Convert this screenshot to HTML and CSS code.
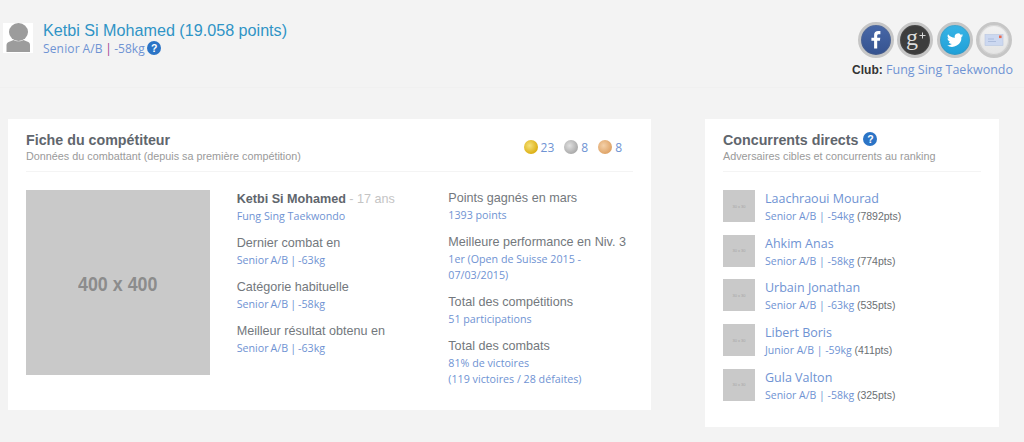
FILE: index.html
```html
<!DOCTYPE html>
<html lang="fr">
<head>
<meta charset="utf-8">
<title>Ketbi Si Mohamed</title>
<link rel="stylesheet" href="styles.css">
</head>
<body>
<header class="top">
  <div class="identity">
    <svg class="avatar" viewBox="0 0 30 30" width="30" height="30"><rect width="30" height="30" fill="#fff"/><ellipse cx="15.500" cy="9" rx="9.500" ry="9" fill="#9c9c9c"/><path d="M3.500 29v-7c0-2 1.500-3 3.500-3.500l3.500-1.500c1.200.8 3 1.300 5 1.300s3.800-.5 5-1.300l3.500 1.500c2 .5 3 1.500 3 3.500v7z" fill="#9c9c9c"/></svg>
    <div>
      <h1 class="name">Ketbi Si Mohamed (19.058 points)</h1>
      <div class="cat"><a>Senior A/B</a> <span class="pipe">|</span> <a>-58kg</a> <span class="help">?</span></div>
    </div>
  </div>
  <div class="share">
    <div class="socials">
      <span class="soc fb"><svg viewBox="0 0 30 30" width="30" height="30"><path d="M16.200 23.500v-7.800h2.700l.4-3h-3.100v-1.900c0-.9.300-1.500 1.600-1.500h1.600V6.100c-.3 0-1.300-.1-2.300-.1-2.400 0-4 1.400-4 4.100v2.600h-2.700v3h2.700v7.800z" fill="#fff"/></svg></span>
      <span class="soc gp"><svg viewBox="0 0 30 30" width="30" height="30"><text class="gp-g" x="6" y="20">g</text><path d="M19.500 10.500h6M22.500 7.500v6" stroke="#d8d8d8" stroke-width="1" fill="none"/></svg></span>
      <span class="soc tw"><svg viewBox="0 0 30 30" width="30" height="30"><path transform="translate(15 15) scale(.82) translate(-15 -15)" d="M25 9.200c-.8.300-1.500.5-2.300.6.800-.5 1.500-1.300 1.800-2.200-.8.500-1.600.8-2.600 1a4 4 0 0 0-7 3.700C11.500 12.100 8.500 10.500 6.500 8c-1.100 1.800-.5 4.200 1.200 5.400-.6 0-1.200-.2-1.800-.5 0 2 1.400 3.600 3.300 4-.6.200-1.200.2-1.800.1.500 1.600 2 2.800 3.800 2.800A8.300 8.300 0 0 1 5 21.500 11.500 11.500 0 0 0 22.800 11.200c.9-.5 1.600-1.200 2.200-2z" fill="#fff"/></svg></span>
      <span class="soc ml"><svg viewBox="0 0 30 30" width="30" height="30"><rect x="6" y="9.500" width="18" height="11" fill="#ccd8f0" stroke="#b8c6e2" stroke-width=".6"/><path d="M9 14h6M9 16.500h8" stroke="#a5b6d8" stroke-width=".8"/><rect x="20" y="10.500" width="2.600" height="2.600" fill="#e8694f"/></svg></span>
    </div>
    <div class="club"><b>Club:</b> <a>Fung Sing Taekwondo</a></div>
  </div>
</header>

<main class="content">
  <section class="card fiche">
    <div class="card-head">
      <div>
        <h2>Fiche du compétiteur</h2>
        <p class="sub">Données du combattant (depuis sa première compétition)</p>
      </div>
      <div class="medals">
        <span class="medal gold"></span><a>23</a>
        <span class="medal silver"></span><a>8</a>
        <span class="medal bronze"></span><a>8</a>
      </div>
    </div>
    <div class="fiche-body">
      <div class="photo"><span class="photo-label">400 x 400</span></div>
      <div class="col col-a">
        <div class="item"><div class="lbl"><b>Ketbi Si Mohamed</b> <span class="age">- 17 ans</span></div><a class="val">Fung Sing Taekwondo</a></div>
        <div class="item"><div class="lbl">Dernier combat en</div><a class="val tight">Senior A/B | -63kg</a></div>
        <div class="item"><div class="lbl">Catégorie habituelle</div><a class="val tight">Senior A/B | -58kg</a></div>
        <div class="item"><div class="lbl">Meilleur résultat obtenu en</div><a class="val tight">Senior A/B | -63kg</a></div>
      </div>
      <div class="col col-b">
        <div class="item"><div class="lbl">Points gagnés en mars</div><a class="val">1393 points</a></div>
        <div class="item"><div class="lbl">Meilleure performance en Niv. 3</div><a class="val">1er (Open de Suisse 2015 -<br>07/03/2015)</a></div>
        <div class="item"><div class="lbl">Total des compétitions</div><a class="val">51 participations</a></div>
        <div class="item"><div class="lbl">Total des combats</div><a class="val">81% de victoires<br>(119 victoires / 28 défaites)</a></div>
      </div>
    </div>
  </section>

  <aside class="card rivals">
    <div class="card-head">
      <div>
        <h2>Concurrents directs <span class="help">?</span></h2>
        <p class="sub">Adversaires cibles et concurrents au ranking</p>
      </div>
    </div>
    <ul class="rival-list">
      <li><span class="thumb">30 x 30</span><div><a class="rname">Laachraoui Mourad</a><div class="rmeta"><a>Senior A/B | -54kg</a> <span>(7892pts)</span></div></div></li>
      <li><span class="thumb">30 x 30</span><div><a class="rname">Ahkim Anas</a><div class="rmeta"><a>Senior A/B | -58kg</a> <span>(774pts)</span></div></div></li>
      <li><span class="thumb">30 x 30</span><div><a class="rname">Urbain Jonathan</a><div class="rmeta"><a>Senior A/B | -63kg</a> <span>(535pts)</span></div></div></li>
      <li><span class="thumb">30 x 30</span><div><a class="rname">Libert Boris</a><div class="rmeta"><a>Junior A/B | -59kg</a> <span>(411pts)</span></div></div></li>
      <li><span class="thumb">30 x 30</span><div><a class="rname">Gula Valton</a><div class="rmeta"><a>Senior A/B | -58kg</a> <span>(325pts)</span></div></div></li>
    </ul>
  </aside>
</main>
</body>
</html>
```
FILE: styles.css
```css
* { box-sizing: border-box; }
html, body { margin: 0; padding: 0; }
body {
  width: 1024px;
  height: 442px;
  overflow: hidden;
  background: #f3f3f3;
  font-family: "Liberation Sans", Arial, sans-serif;
  color: #6b6f73;
}
a { color: #6f93d3; text-decoration: none; }
h1, h2, p, ul { margin: 0; padding: 0; }
ul { list-style: none; }

.top {
  height: 88px;
  padding: 21px 11px 0 3px;
  display: flex;
  justify-content: space-between;
  border-bottom: 1px solid #f0f0f0;
}
.identity { display: flex; gap: 10px; }
.avatar { margin-top: 2px; }
.name { font-size: 16.150px; line-height: 19px; font-weight: 400; color: #2f94c6; }
.cat { font-family: "Open Sans", sans-serif; font-size: 12px; line-height: 18px; word-spacing: -.6px; }
.cat a:first-child { letter-spacing: .15px; }
.pipe { color: #a0408f; }
.help {
  display: inline-block;
  width: 14px;
  height: 14px;
  border-radius: 50%;
  background: #2b74c6;
  color: #fff;
  font: 700 10.500px/14px "Liberation Sans", sans-serif;
  text-align: center;
  vertical-align: 1px;
}

.share { display: flex; flex-direction: column; align-items: flex-end; }
.socials { display: flex; gap: 3.500px; margin-right: 1px; margin-top: 1px; }
.soc {
  width: 36px;
  height: 36px;
  border-radius: 50%;
  border: 3px solid #c6c6c6;
  box-shadow: inset 0 0 1px 1px rgba(120, 120, 120, .25);
  display: block;
  overflow: hidden;
}
.soc svg { display: block; }
.fb { background: linear-gradient(#4868a8, #35528f); }
.gp { background: #3d3d3d; }
.gp-g { font-family: "Liberation Serif", serif; font-size: 24px; fill: #dcdcdc; }
.tw { background: linear-gradient(#38b4e6, #1fa0d8); }
.ml { background: linear-gradient(#f2f2f2, #e4e4e4); }
.club { font-family: "Open Sans", sans-serif; font-size: 12.500px; line-height: 16px; margin-top: 4px; }
.club b { font-family: "Liberation Sans", sans-serif; color: #333; font-size: 12px; }

.content { display: flex; align-items: flex-start; padding: 31px 0 0 8px; gap: 54px; }
.card { background: #fff; padding: 14px 18px 0; }
.fiche { width: 643px; height: 291px; }
.rivals { width: 294px; height: 308px; }
.card-head {
  display: flex;
  justify-content: space-between;
  height: 39px;
  border-bottom: 1px solid #f4f4f4;
}
h2 { font-size: 14.250px; line-height: 15px; font-weight: 700; color: #5f666d; }
h2 .help { vertical-align: 2px; margin: -4px 0 -4px 1px; }
.sub { font-size: 10.800px; line-height: 14px; margin-top: 1px; color: #9a9a9a; }
.medals {
  display: flex;
  align-items: center;
  height: 28px;
  padding-right: 11px;
  font-family: "Open Sans", sans-serif;
  font-size: 12px;
}
.medals a { margin-left: 3px; margin-right: 10px; }
.medals a:last-child { margin-right: 0; }
.medal { width: 14px; height: 14px; border-radius: 50%; }
.gold { background: radial-gradient(circle at 40% 40%, #f6e27a, #dcb015 70%); }
.silver { background: radial-gradient(circle at 40% 40%, #e0e0e0, #ababab 70%); }
.bronze { background: radial-gradient(circle at 40% 40%, #f4d0a8, #dfa468 70%); }

.fiche-body { display: flex; margin-top: 18px; }
.photo {
  width: 184px;
  height: 185px;
  padding-top: 2px;
  background: #c9c9c9;
  color: #8c8c8c;
  font-weight: 700;
  font-size: 21px;
  display: flex;
  align-items: center;
  justify-content: center;
}
.photo-label { display: inline-block; white-space: nowrap; transform: scaleX(.85); }
.col { display: flex; flex-direction: column; gap: 11px; }
.col-a { width: 212px; margin-left: 27px; padding-top: 1px; }
.col-b { width: 185px; }
.lbl { font-size: 12.600px; line-height: 17px; color: #73787d; }
.lbl b { color: #5f666d; }
.age { color: #c4c4c4; }
.val { display: block; font-family: "Open Sans", sans-serif; font-size: 10.700px; line-height: 16px; }
.tight { word-spacing: -.8px; }

.rival-list { margin-top: 18px; display: flex; flex-direction: column; gap: 12.700px; }
.rival-list li { display: flex; gap: 10px; height: 32px; }
.thumb {
  flex: none;
  width: 32px;
  height: 32px;
  background: #c9c9c9;
  color: #a5a5a5;
  font-size: 4px;
  display: flex;
  align-items: center;
  justify-content: center;
}
.rname { display: block; font-family: "Open Sans", sans-serif; font-size: 12.500px; line-height: 18px; }
.rmeta { font-family: "Open Sans", sans-serif; font-size: 10.500px; line-height: 16px; }
.rmeta span { font-family: "Liberation Sans", sans-serif; color: #6b6f73; font-size: 10.500px; }
```
